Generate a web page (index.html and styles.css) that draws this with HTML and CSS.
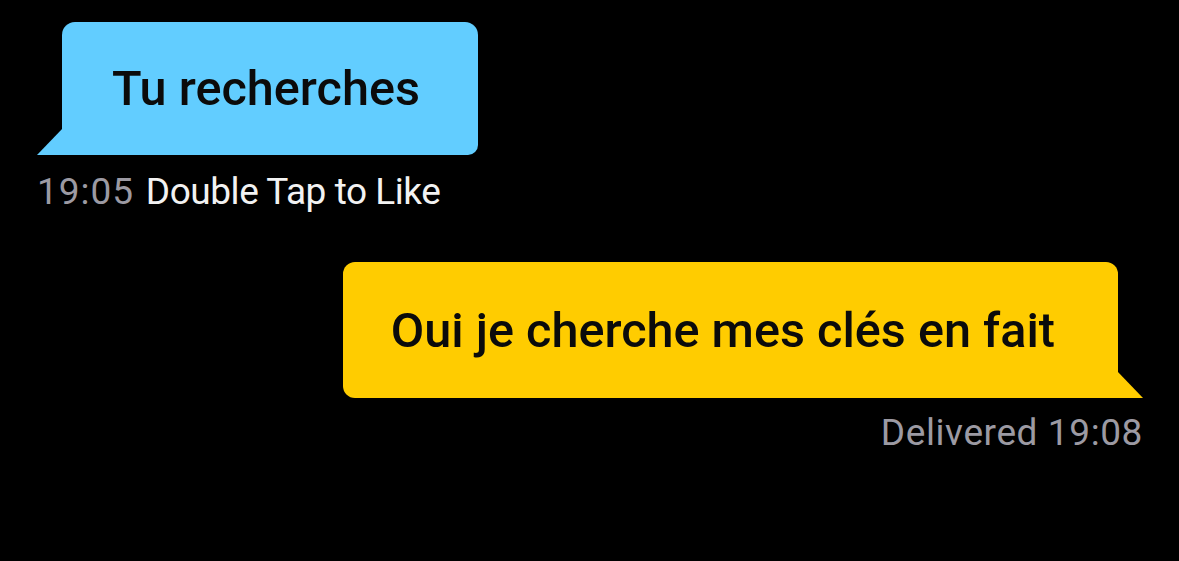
FILE: index.html
```html
<!DOCTYPE html>
<html lang="en">
<head>
  <meta charset="UTF-8" />
  <title>Chat</title>
  <link rel="stylesheet" href="styles.css">
</head>
<body>

  <div class="chat">
    <div class="msg msg-in">
      <div class="bubble bubble-in">Tu recherches</div>
      <p class="meta"><span class="time">19:05</span> Double Tap to Like</p>
    </div>

    <div class="msg msg-out">
      <div class="bubble bubble-out">Oui je cherche mes clés en fait</div>
      <p class="meta meta-out">Delivered 19:08</p>
    </div>
  </div>

</body>
</html>
```

FILE: styles.css
```css
* { box-sizing: border-box; margin: 0; padding: 0; }
body {
  font-family: Roboto, 'Noto Sans', sans-serif;
  background: #000;
  color: #fff;
  min-height: 100vh;
}

.chat {
  display: flex;
  flex-direction: column;
  padding: 22px 36px 0 37px;
}

.msg {
  display: flex;
  flex-direction: column;
}

.msg-in { align-items: flex-start; }
.msg-out { align-items: flex-end; margin-top: 50px; }

.bubble {
  position: relative;
  font-size: 48.6px;
  font-weight: 500;
  line-height: 56px;
  color: #0b0b0b;
}

.bubble::after {
  content: '';
  position: absolute;
  bottom: 0;
  width: 26px;
  height: 27px;
}

.bubble-in {
  margin-left: 25px;
  padding: 39px 58px 38px 50px;
  background: #62cdff;
  border-radius: 13px 13px 10px 0;
}

.bubble-in::after {
  left: -25px;
  background: #62cdff;
  clip-path: polygon(0 100%, 100% 0, 100% 100%);
}

.bubble-out {
  margin-right: 25px;
  padding: 41px 63px 39px 48px;
  background: #ffcc00;
  border-radius: 12px 12px 0 12px;
}

.bubble-out::after {
  right: -25px;
  background: #ffcc00;
  clip-path: polygon(0 0, 100% 100%, 0 100%);
}

.meta {
  font-size: 37px;
  letter-spacing: -0.45px;
  line-height: 40px;
  margin-top: 17px;
  color: #f2f2f2;
}

.time {
  color: #9c9aa3;
  letter-spacing: 1px;
  margin-right: 3px;
}

.meta-out {
  color: #9c9aa3;
  letter-spacing: 0.6px;
  margin-top: 15px;
}
```
